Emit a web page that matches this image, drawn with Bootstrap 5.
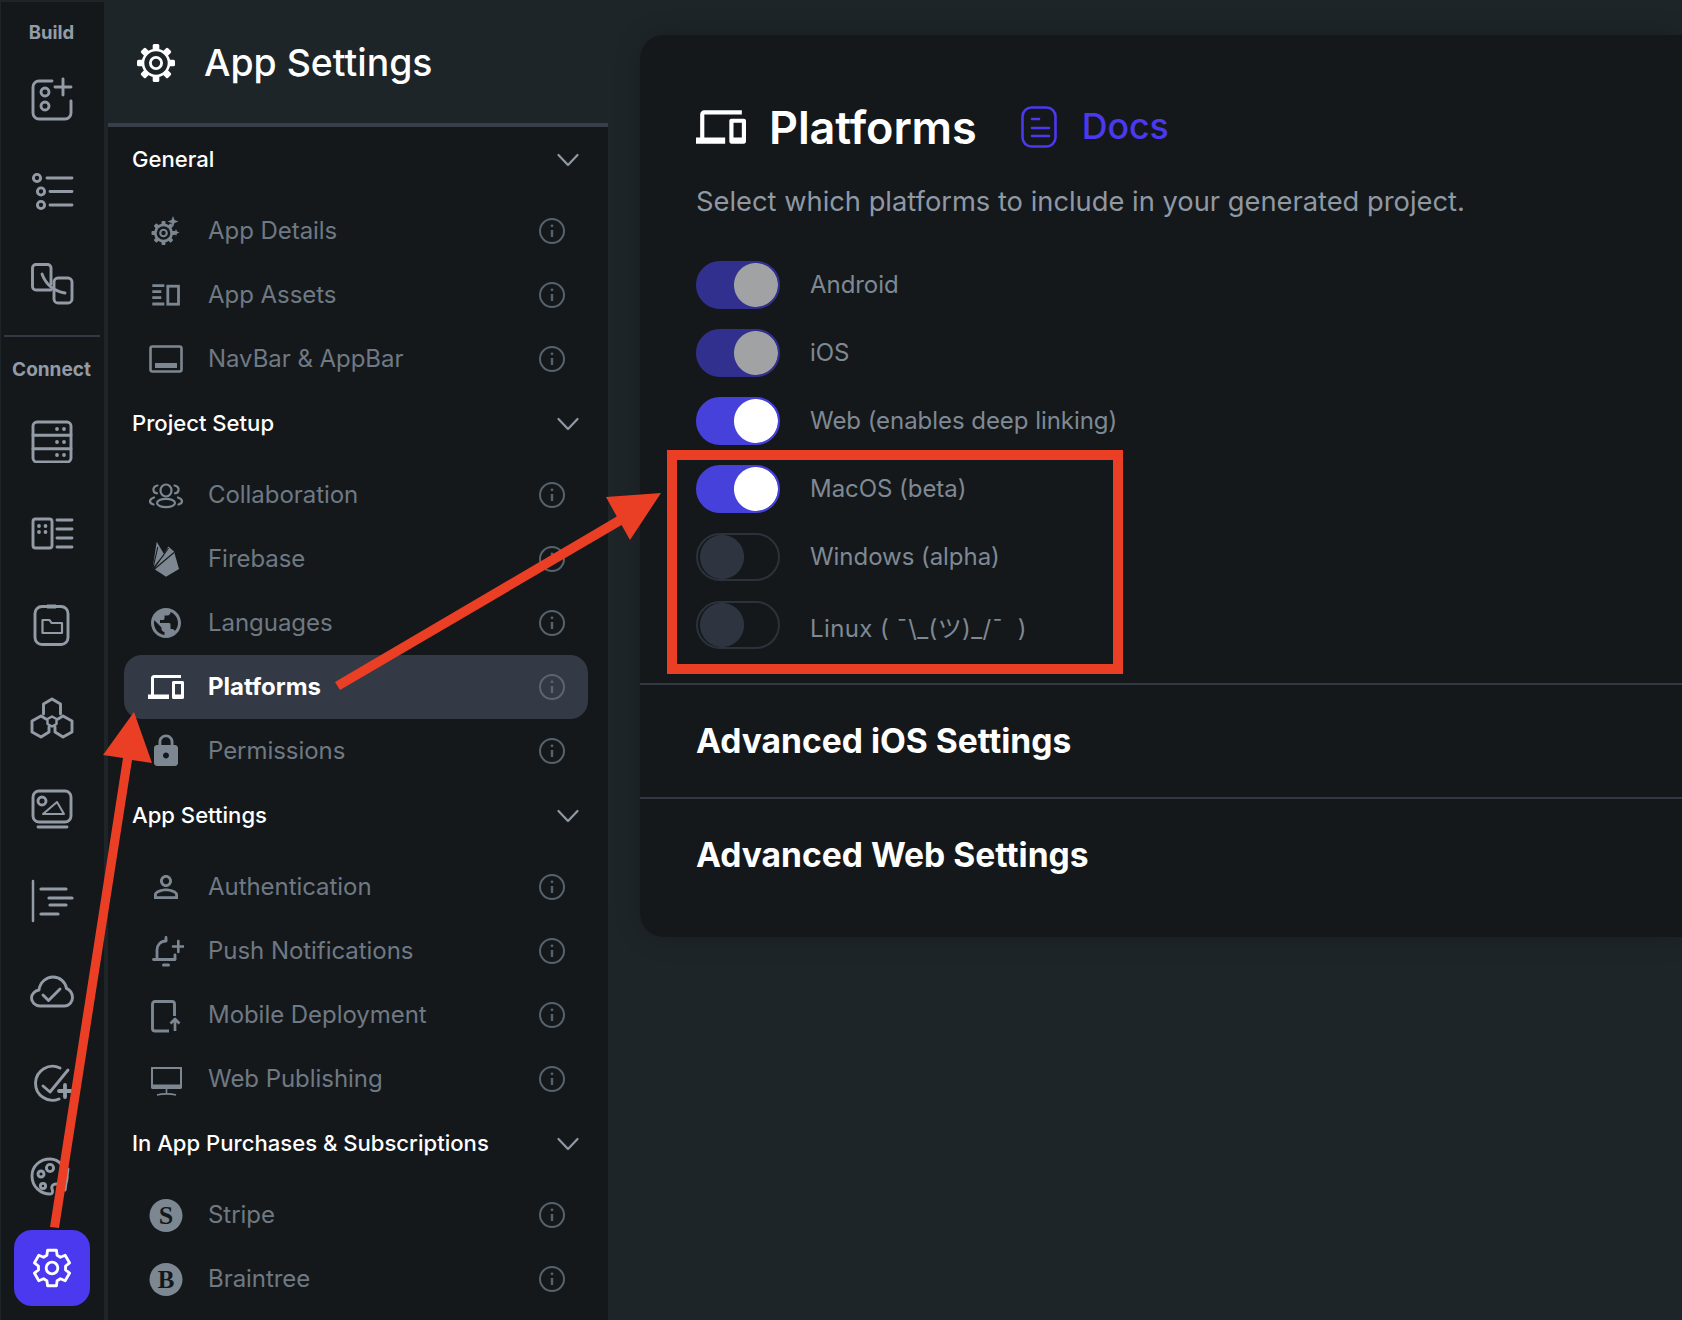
<!doctype html>
<html lang="en"><head><meta charset="utf-8"><title>App Settings</title>
<link href="https://cdn.jsdelivr.net/npm/bootstrap@5.3.0/dist/css/bootstrap.min.css" rel="stylesheet">
<script src="https://cdn.jsdelivr.net/npm/bootstrap@5.3.0/dist/js/bootstrap.bundle.min.js"></script>
<style>
:root{--pg:#1e2529;--dk:#14181b;--line:#323943;--blue:#4b39ef}
html,body{height:1320px;overflow:hidden}
body{background:var(--pg);font-family:Inter,"Noto Sans CJK JP",sans-serif;color:#fff;position:relative}
.app-shell{height:1320px}
.rail{width:103px;margin:2px 0 0 1px;background:var(--dk);flex:none}
.rail-label{font-size:18.5px;font-weight:700;color:#939ca6;line-height:24px;text-align:center;padding-right:2px}
.rail-label.first{padding-top:18px;height:51px}
.rail-label.second{padding-top:21px;height:58px;font-size:19px}
.rail-sep{height:2px;margin:6px 4px 0 3px;background:var(--line);width:96px}
.rail-cell{height:92px;color:#939ca6;padding-right:2px}
.rail-cell svg{stroke-width:2.9}
.rail-active{width:76px;height:76px;background:var(--blue);border-radius:18px;margin:7px 13px 0;color:#fff}
.side{width:500px;margin-left:4px;flex:none;background:var(--dk)}
.side-head{height:127px;background:var(--pg);border-bottom:4px solid #383f4a;padding:2px 0 0 28px;gap:28px}
.side-title{font-size:37.4px;font-weight:500;line-height:1}
.sec-head{height:66px;margin-bottom:6px;padding:0 29px 0 24px;font-size:22.1px;font-weight:500}
.nav-row{height:64px;margin:0 20px 0 16px;padding:0 23px 0 24px;gap:24px;font-size:24px;letter-spacing:-.05px;color:#6f7983;border-radius:18px}
.nav-row .nico{color:#7d8791;flex:none}
.nav-row .inf{margin-left:auto;color:#57636c;flex:none}
.nav-row.on{background:#343a45;color:#fff;font-weight:700;letter-spacing:0}
.nav-row.on .nico{color:#fff}
.nav-row.on .inf{color:#5b6570}
.content{flex:1;padding:35px 0 0 32px;min-width:0}
.panel{background:var(--dk);border-radius:24px 0 0 24px;height:902px;box-shadow:0 0 26px rgba(0,0,0,.22)}
.panel-top{padding:62px 0 0 56px}
.title-row{height:60px}
.title-text{font-size:45px;font-weight:600;line-height:1;margin-left:23px;letter-spacing:-.1px}
.docs-text{font-size:35.7px;font-weight:500;color:var(--blue);line-height:1;margin-left:25px}
.docs-ico{margin-left:44px;color:var(--blue)}
.desc{font-size:27.3px;line-height:40px;color:#8f98a3;margin-top:25px}
.plat-list{margin-top:39px}
.plat-row{height:48px;margin-bottom:20px;gap:30px;font-size:24px;letter-spacing:-.05px;padding:0!important}
.plat-row:last-child{margin-bottom:0}
.form-switch .form-check-input.tg{width:84px;height:48px;margin:0;float:none;flex:none;border:2px solid #2b323b;border-radius:24px;background-color:transparent;background-repeat:no-repeat;background-size:48px 48px;background-position:left 0 center;background-image:radial-gradient(circle at center,#2e3540 21.5px,transparent 22.5px);box-shadow:none;opacity:1}
.form-switch .form-check-input.tg:checked{background-color:#4741dc;border-color:#4741dc;background-position:right -2px center;background-image:radial-gradient(circle at center,#fff 21.5px,transparent 22.5px)}
.form-switch .form-check-input.tg:disabled{opacity:.6}
.form-check-label.plab{opacity:1!important;color:#7f8993}
.shrug{padding-top:7px;letter-spacing:.4px}
.adv{height:114px;border-top:2px solid var(--line);padding-left:56px;font-size:33.6px;font-weight:700}
.adv-wrap{margin-top:34px}
.overlay{position:absolute;left:0;top:0;pointer-events:none}
</style></head>
<body>
<div class="app-shell d-flex">
<nav class="rail d-flex flex-column">
 <div class="rail-label first">Build</div>
 <div class="rail-cell d-flex align-items-center justify-content-center"><svg width="44" height="44" fill="none" stroke="currentColor" stroke-width="2.5" stroke-linecap="round"><path d="M22 4H9a6 6 0 0 0-6 6v26a6 6 0 0 0 6 6h26a6 6 0 0 0 6-6V24"/><circle cx="15" cy="15" r="4"/><circle cx="15" cy="29" r="4"/><path d="M33 2v16M25 10h16"/></svg></div>
 <div class="rail-cell d-flex align-items-center justify-content-center"><svg width="44" height="44" fill="none" stroke="currentColor" stroke-width="2.5" stroke-linecap="round"><circle cx="7" cy="9" r="3.6"/><circle cx="11" cy="22.5" r="3.6"/><circle cx="11" cy="36" r="3.6"/><path d="M17 9h25M20 22.5h22M20 36h22"/></svg></div>
 <div class="rail-cell d-flex align-items-center justify-content-center"><svg width="44" height="44" fill="none" stroke="currentColor" stroke-width="2.5" stroke-linecap="round"><path d="M21 23V7a3.500 3.500 0 0 0-3.500-3.500H6A3.500 3.500 0 0 0 2.500 7v18.500A3.500 3.500 0 0 0 6 29h15"/><rect x="24" y="17" width="18" height="25" rx="4"/><path d="M12 13c4 11 12 17 23 19"/></svg></div>
 <div class="rail-sep"></div>
 <div class="rail-label second">Connect</div>
 <div class="rail-cell d-flex align-items-center justify-content-center"><svg width="44" height="44" fill="none" stroke="currentColor" stroke-width="2.5" stroke-linecap="round"><rect x="3" y="3" width="38" height="40" rx="4"/><path d="M3 16.300h38M3 29.700h38"/><g fill="currentColor" stroke="none"><circle cx="27" cy="10" r="1.900"/><circle cx="34" cy="10" r="1.900"/><circle cx="27" cy="23" r="1.900"/><circle cx="34" cy="23" r="1.900"/><circle cx="27" cy="36" r="1.900"/><circle cx="34" cy="36" r="1.900"/></g></svg></div>
 <div class="rail-cell d-flex align-items-center justify-content-center"><svg width="44" height="44" fill="none" stroke="currentColor" stroke-width="2.5" stroke-linecap="round"><rect x="3" y="8" width="19" height="29" rx="2.500"/><path d="M27 9h15M27 18h15M27 27h15M27 36h15"/><g fill="currentColor" stroke="none"><circle cx="9" cy="15" r="1.900"/><circle cx="15.500" cy="15" r="1.900"/><circle cx="9" cy="21" r="1.900"/><circle cx="15.500" cy="21" r="1.900"/></g></svg></div>
 <div class="rail-cell d-flex align-items-center justify-content-center"><svg width="44" height="44" fill="none" stroke="currentColor" stroke-width="2.5" stroke-linejoin="round"><rect x="5" y="3.500" width="33" height="38" rx="7"/><path d="M17 3.500h9" stroke-width="4"/><path d="M12.500 17h7l2 3h10.500v10H12.500z" stroke-width="2.200"/></svg></div>
 <div class="rail-cell d-flex align-items-center justify-content-center"><svg width="44" height="44" fill="none" stroke="currentColor" stroke-width="2.500" stroke-linejoin="round" stroke-linecap="round"><path d="M13.500 19V9l8.500-5 8.500 5v10"/><path d="M16 24l-5-3-9 5v11l9 5 8-5v-5"/><path d="M28 24l5-3 9 5v11l-9 5-8-5v-5"/><path d="M22 21.500l4.500 2.500v5l-4.500 2.500-4.500-2.500v-5z" stroke-width="2.400"/></svg></div>
 <div class="rail-cell d-flex align-items-center justify-content-center"><svg width="44" height="44" fill="none" stroke="currentColor" stroke-width="2.500" stroke-linejoin="round" stroke-linecap="round"><rect x="3" y="4" width="38" height="31" rx="6"/><circle cx="12" cy="14" r="4"/><path d="M27 15l7 12H13z" stroke-width="2"/><path d="M8 40h29"/></svg></div>
 <div class="rail-cell d-flex align-items-center justify-content-center"><svg width="44" height="44" fill="none" stroke="currentColor" stroke-linecap="round"><path d="M3 2v40" stroke-width="2.500"/><path d="M11 10h25M19 19h23M20 26h16M11 35h17" stroke-width="3.200"/></svg></div>
 <div class="rail-cell d-flex align-items-center justify-content-center"><svg width="44" height="44" fill="none" stroke="currentColor" stroke-width="2.500" stroke-linecap="round" stroke-linejoin="round"><path d="M10 35c-5 0-8.500-4-8.500-8s3.500-7.500 7.500-8C10 11 16.500 6 23 6c7 0 12.500 5 13.500 11.500 3.500 1 6 5 6 9 0 4.500-3.500 8.500-8 8.500z"/><path d="M13 24l5.500 5.500L30 18"/></svg></div>
 <div class="rail-cell d-flex align-items-center justify-content-center"><svg width="44" height="44" fill="none" stroke="currentColor" stroke-width="2.500" stroke-linecap="round" stroke-linejoin="round"><path d="M30 5a17 17 0 1 0-1 31"/><path d="M13 23l7 6L38 7"/><path d="M35 22v12M29 28h12" stroke-width="3.800"/></svg></div>
 <div class="rail-cell d-flex align-items-center justify-content-center"><svg width="44" height="44" fill="none" stroke="currentColor" stroke-width="2.300" stroke-linecap="round" stroke-linejoin="round"><path d="M20 4C10 4 2 11 2 21c0 11 9 18 18 18 3 0 3-3 2-5-1-3 1-5 4-5h6c3 0 5-2 5-6 0-10-8-19-17-19z"/><circle cx="20" cy="13" r="3.600"/><circle cx="11" cy="19" r="3"/><circle cx="13" cy="31" r="2.600"/><path d="M38 14l-3 21"/></svg></div>
 <div class="rail-active d-flex align-items-center justify-content-center"><svg width="40" height="40" viewBox="0 0 24 24" fill="none" stroke="currentColor" stroke-width="1.700" stroke-linejoin="round"><path d="M8.930 4.400L9.340 1.330H14.660L15.070 4.400L17.050 5.540L19.910 4.360L22.570 8.970L20.120 10.860V13.140L22.570 15.030L19.910 19.640L17.050 18.460L15.070 19.600L14.660 22.670H9.340L8.930 19.600L6.950 18.460L4.090 19.640L1.430 15.030L3.880 13.140V10.860L1.430 8.970L4.090 4.360L6.950 5.540Z"/><circle cx="12" cy="12" r="3.500"/></svg></div>
</nav>

<aside class="side">
 <div class="side-head d-flex align-items-center">
  <svg width="40" height="40" viewBox="0 0 40 40" fill="none"><g fill="#fff"><rect x="16.700" y="1" width="6.600" height="8" rx="1.500"/><rect x="16.700" y="1" width="6.600" height="8" rx="1.500" transform="rotate(45 20 20)"/><rect x="16.700" y="1" width="6.600" height="8" rx="1.500" transform="rotate(90 20 20)"/><rect x="16.700" y="1" width="6.600" height="8" rx="1.500" transform="rotate(135 20 20)"/><rect x="16.700" y="1" width="6.600" height="8" rx="1.500" transform="rotate(180 20 20)"/><rect x="16.700" y="1" width="6.600" height="8" rx="1.500" transform="rotate(225 20 20)"/><rect x="16.700" y="1" width="6.600" height="8" rx="1.500" transform="rotate(270 20 20)"/><rect x="16.700" y="1" width="6.600" height="8" rx="1.500" transform="rotate(315 20 20)"/></g><circle cx="20" cy="20" r="13" fill="#1e2529" stroke="#fff" stroke-width="2.600"/><circle cx="20" cy="20" r="5.600" stroke="#fff" stroke-width="2.800"/></svg>
  <div class="side-title">App Settings</div>
 </div>

 <div class="sec-head d-flex align-items-center justify-content-between"><span>General</span><svg width="22" height="14" fill="none" stroke="#8f98a3" stroke-width="2.200" stroke-linecap="round" stroke-linejoin="round"><path d="M1.500 2L11 12l9.500-10"/></svg></div>
 <div class="nav-row d-flex align-items-center"><svg class="nico" width="36" height="36" viewBox="0 0 36 36" fill="currentColor"><g><rect x="13.500" y="8" width="4" height="24" rx="1"/><rect x="13.500" y="8" width="4" height="24" rx="1" transform="rotate(45 15.500 20)"/><rect x="13.500" y="8" width="4" height="24" rx="1" transform="rotate(90 15.500 20)"/><rect x="13.500" y="8" width="4" height="24" rx="1" transform="rotate(135 15.500 20)"/></g><circle cx="15.500" cy="20" r="9.500"/><circle cx="15.500" cy="20" r="6.800" fill="#14181b"/><circle cx="15.500" cy="20" r="4.300"/><circle cx="15.500" cy="20" r="2.200" fill="#14181b"/><path d="M25 3l1.500 4 4 1.500-4 1.500-1.500 4-1.500-4-4-1.500 4-1.500zM28 16l1 2.500 2.500 1-2.500 1-1 2.500-1-2.500-2.500-1 2.500-1z"/></svg><span>App Details</span><svg class="inf" width="26" height="26" fill="none" stroke="currentColor" stroke-width="2"><circle cx="13" cy="13" r="12"/><path d="M13 12v7" stroke-width="2.400"/><circle cx="13" cy="7.800" r="1.400" fill="currentColor" stroke="none"/></svg></div>
 <div class="nav-row d-flex align-items-center"><svg class="nico" width="36" height="36" fill="none" stroke="currentColor" stroke-width="2.800"><path d="M4.300 8.700h12M4.300 14.700h9M4.300 20.700h9M4.300 27h12"/><rect x="19.800" y="9.200" width="10.700" height="18"/></svg><span>App Assets</span><svg class="inf" width="26" height="26" fill="none" stroke="currentColor" stroke-width="2"><circle cx="13" cy="13" r="12"/><path d="M13 12v7" stroke-width="2.400"/><circle cx="13" cy="7.800" r="1.400" fill="currentColor" stroke="none"/></svg></div>
 <div class="nav-row d-flex align-items-center"><svg class="nico" width="36" height="36" fill="none" stroke="currentColor" stroke-width="2.600"><rect x="2.500" y="5.500" width="31" height="25" rx="2"/><rect x="7" y="22" width="22" height="5" fill="currentColor" stroke="none"/></svg><span>NavBar &amp; AppBar</span><svg class="inf" width="26" height="26" fill="none" stroke="currentColor" stroke-width="2"><circle cx="13" cy="13" r="12"/><path d="M13 12v7" stroke-width="2.400"/><circle cx="13" cy="7.800" r="1.400" fill="currentColor" stroke="none"/></svg></div>

 <div class="sec-head d-flex align-items-center justify-content-between"><span>Project Setup</span><svg width="22" height="14" fill="none" stroke="#8f98a3" stroke-width="2.200" stroke-linecap="round" stroke-linejoin="round"><path d="M1.500 2L11 12l9.500-10"/></svg></div>
 <div class="nav-row d-flex align-items-center"><svg class="nico" width="36" height="36" fill="none" stroke="currentColor" stroke-width="2.200" stroke-linecap="round"><ellipse cx="18" cy="13.500" rx="5.500" ry="6"/><ellipse cx="18" cy="26" rx="9" ry="4.200"/><path d="M9.500 8.500C6.500 9 5 11 5.500 13.500c.3 1.500 2 2.700 3.500 2.800M26.500 8.500c3 .5 4.500 2.500 4 5-.3 1.500-2 2.700-3.500 2.800M6 20.500c-2.500.8-4 2.200-4 3.800s1.500 2.700 3.500 3.200M30 20.500c2.500.8 4 2.200 4 3.800s-1.500 2.700-3.500 3.200"/></svg><span>Collaboration</span><svg class="inf" width="26" height="26" fill="none" stroke="currentColor" stroke-width="2"><circle cx="13" cy="13" r="12"/><path d="M13 12v7" stroke-width="2.400"/><circle cx="13" cy="7.800" r="1.400" fill="currentColor" stroke="none"/></svg></div>
 <div class="nav-row d-flex align-items-center"><svg class="nico" width="36" height="36" fill="currentColor"><path d="M4.700 27L8.700.7 16 13l4.300-7.500 5.700 5L31 28 18 35.700z"/><path d="M5 27L9.800 6M5 27.500L15.800 13.800M5.500 28L20.500 7M6 28.500L26 11.500" fill="none" stroke="#14181b" stroke-width="1.100"/></svg><span>Firebase</span><svg class="inf" width="26" height="26" fill="none" stroke="currentColor" stroke-width="2"><circle cx="13" cy="13" r="12"/><path d="M13 12v7" stroke-width="2.400"/><circle cx="13" cy="7.800" r="1.400" fill="currentColor" stroke="none"/></svg></div>
 <div class="nav-row d-flex align-items-center"><svg class="nico" width="36" height="36" viewBox="0 0 24 24" fill="currentColor"><path d="M12 2C6.480 2 2 6.480 2 12s4.480 10 10 10 10-4.480 10-10S17.520 2 12 2zm-1 17.930c-3.950-.490-7-3.850-7-7.930 0-.620.080-1.210.210-1.790L9 15v1c0 1.100.900 2 2 2v1.930zm6.900-2.540c-.260-.810-1-1.390-1.900-1.390h-1v-3c0-.550-.450-1-1-1H8v-2h2c.550 0 1-.450 1-1V7h2c1.100 0 2-.900 2-2v-.410c2.930 1.190 5 4.060 5 7.410 0 2.080-.800 3.970-2.100 5.390z"/></svg><span>Languages</span><svg class="inf" width="26" height="26" fill="none" stroke="currentColor" stroke-width="2"><circle cx="13" cy="13" r="12"/><path d="M13 12v7" stroke-width="2.400"/><circle cx="13" cy="7.800" r="1.400" fill="currentColor" stroke="none"/></svg></div>
 <div class="nav-row on d-flex align-items-center"><svg class="nico" width="36" height="36" viewBox="0 0 24 24" fill="currentColor"><path d="M4 6h18V4H4c-1.100 0-2 .900-2 2v11H0v3h14v-3H4V6zm19 2h-6c-.550 0-1 .450-1 1v10c0 .550.450 1 1 1h6c.550 0 1-.450 1-1V9c0-.550-.450-1-1-1zm-1 9h-4v-7h4v7z"/></svg><span>Platforms</span><svg class="inf" width="26" height="26" fill="none" stroke="currentColor" stroke-width="2"><circle cx="13" cy="13" r="12"/><path d="M13 12v7" stroke-width="2.400"/><circle cx="13" cy="7.800" r="1.400" fill="currentColor" stroke="none"/></svg></div>
 <div class="nav-row d-flex align-items-center"><svg class="nico" width="36" height="36" viewBox="0 0 24 24" fill="currentColor"><path d="M18 8h-1V6c0-2.760-2.240-5-5-5S7 3.240 7 6v2H6c-1.100 0-2 .900-2 2v10c0 1.100.900 2 2 2h12c1.100 0 2-.900 2-2V10c0-1.100-.900-2-2-2zm-6 9c-1.100 0-2-.900-2-2s.900-2 2-2 2 .900 2 2-.900 2-2 2zm3.100-9H8.900V6c0-1.710 1.390-3.100 3.100-3.100 1.710 0 3.100 1.390 3.100 3.100v2z"/></svg><span>Permissions</span><svg class="inf" width="26" height="26" fill="none" stroke="currentColor" stroke-width="2"><circle cx="13" cy="13" r="12"/><path d="M13 12v7" stroke-width="2.400"/><circle cx="13" cy="7.800" r="1.400" fill="currentColor" stroke="none"/></svg></div>

 <div class="sec-head d-flex align-items-center justify-content-between"><span>App Settings</span><svg width="22" height="14" fill="none" stroke="#8f98a3" stroke-width="2.200" stroke-linecap="round" stroke-linejoin="round"><path d="M1.500 2L11 12l9.500-10"/></svg></div>
 <div class="nav-row d-flex align-items-center"><svg class="nico" width="36" height="36" viewBox="0 0 24 24" fill="currentColor"><path d="M12 5.900c1.160 0 2.100.940 2.100 2.100s-.940 2.100-2.100 2.100S9.900 9.160 9.900 8s.940-2.100 2.100-2.100m0 9c2.970 0 6.100 1.460 6.100 2.100v1.100H5.900V17c0-.640 3.130-2.100 6.100-2.100M12 4C9.790 4 8 5.790 8 8s1.790 4 4 4 4-1.790 4-4-1.790-4-4-4zm0 9c-2.670 0-8 1.340-8 4v3h16v-3c0-2.660-5.330-4-8-4z"/></svg><span>Authentication</span><svg class="inf" width="26" height="26" fill="none" stroke="currentColor" stroke-width="2"><circle cx="13" cy="13" r="12"/><path d="M13 12v7" stroke-width="2.400"/><circle cx="13" cy="7.800" r="1.400" fill="currentColor" stroke="none"/></svg></div>
 <div class="nav-row d-flex align-items-center"><svg class="nico" width="36" height="36" fill="none" stroke="currentColor" stroke-width="2.800" stroke-linecap="round"><path d="M9 26V17c0-5 3.500-9 9-9M27 26v-4"/><path d="M18 4.500v3M5.500 26.500h21.500"/><path d="M15.500 32h5" stroke-width="3"/><path d="M30.300 8v11M25 13.500h10.500" stroke-width="2.600"/></svg><span>Push Notifications</span><svg class="inf" width="26" height="26" fill="none" stroke="currentColor" stroke-width="2"><circle cx="13" cy="13" r="12"/><path d="M13 12v7" stroke-width="2.400"/><circle cx="13" cy="7.800" r="1.400" fill="currentColor" stroke="none"/></svg></div>
 <div class="nav-row d-flex align-items-center"><svg class="nico" width="36" height="36" fill="none" stroke="currentColor" stroke-width="2.900" stroke-linejoin="round"><path d="M21 34H7a2.500 2.500 0 0 1-2.500-2.500V7A2.500 2.500 0 0 1 7 4.500h17A2.500 2.500 0 0 1 26.500 7v12"/><path d="M27 34V22M22.500 26.500L27 22l4.500 4.500" stroke-width="2.700"/></svg><span>Mobile Deployment</span><svg class="inf" width="26" height="26" fill="none" stroke="currentColor" stroke-width="2"><circle cx="13" cy="13" r="12"/><path d="M13 12v7" stroke-width="2.400"/><circle cx="13" cy="7.800" r="1.400" fill="currentColor" stroke="none"/></svg></div>
 <div class="nav-row d-flex align-items-center"><svg class="nico" width="36" height="36" fill="none" stroke="currentColor" stroke-width="2"><rect x="4" y="7" width="29" height="19"/><rect x="3.500" y="23.500" width="30" height="4.500" fill="currentColor" stroke="none"/><path d="M18.500 28v4M9 34c5-1.500 14-1.500 19 0" stroke-width="1.600"/></svg><span>Web Publishing</span><svg class="inf" width="26" height="26" fill="none" stroke="currentColor" stroke-width="2"><circle cx="13" cy="13" r="12"/><path d="M13 12v7" stroke-width="2.400"/><circle cx="13" cy="7.800" r="1.400" fill="currentColor" stroke="none"/></svg></div>

 <div class="sec-head d-flex align-items-center justify-content-between"><span>In App Purchases &amp; Subscriptions</span><svg width="22" height="14" fill="none" stroke="#8f98a3" stroke-width="2.200" stroke-linecap="round" stroke-linejoin="round"><path d="M1.500 2L11 12l9.500-10"/></svg></div>
 <div class="nav-row d-flex align-items-center"><svg class="nico" width="36" height="36"><circle cx="18" cy="18.500" r="16.500" fill="currentColor"/><text x="18" y="27" text-anchor="middle" font-family="Liberation Serif" font-weight="700" font-size="26" fill="#14181b">S</text></svg><span>Stripe</span><svg class="inf" width="26" height="26" fill="none" stroke="currentColor" stroke-width="2"><circle cx="13" cy="13" r="12"/><path d="M13 12v7" stroke-width="2.400"/><circle cx="13" cy="7.800" r="1.400" fill="currentColor" stroke="none"/></svg></div>
 <div class="nav-row d-flex align-items-center"><svg class="nico" width="36" height="36"><circle cx="18" cy="18.500" r="16.500" fill="currentColor"/><text x="18" y="27" text-anchor="middle" font-family="Liberation Serif" font-weight="700" font-size="25" fill="#14181b">B</text></svg><span>Braintree</span><svg class="inf" width="26" height="26" fill="none" stroke="currentColor" stroke-width="2"><circle cx="13" cy="13" r="12"/><path d="M13 12v7" stroke-width="2.400"/><circle cx="13" cy="7.800" r="1.400" fill="currentColor" stroke="none"/></svg></div>
</aside>

<main class="content">
 <section class="panel">
  <div class="panel-top">
   <div class="title-row d-flex align-items-center">
    <svg width="50" height="50" viewBox="0 0 24 24" fill="#fff"><path d="M4 6h18V4H4c-1.100 0-2 .900-2 2v11H0v3h14v-3H4V6zm19 2h-6c-.550 0-1 .450-1 1v10c0 .550.450 1 1 1h6c.550 0 1-.450 1-1V9c0-.550-.450-1-1-1zm-1 9h-4v-7h4v7z"/></svg>
    <div class="title-text">Platforms</div>
    <svg class="docs-ico" width="36" height="42" fill="none" stroke="currentColor" stroke-width="2.600" stroke-linecap="round"><rect x="1.500" y="1.500" width="33" height="39" rx="9"/><path d="M11 13h7M11 22h17M11 30h17"/></svg>
    <div class="docs-text">Docs</div>
   </div>
   <div class="desc">Select which platforms to include in your generated project.</div>
   <div class="plat-list">
    <div class="plat-row form-check form-switch d-flex align-items-center"><input class="form-check-input tg" type="checkbox" role="switch" id="p1" checked disabled><label class="form-check-label plab" for="p1">Android</label></div>
    <div class="plat-row form-check form-switch d-flex align-items-center"><input class="form-check-input tg" type="checkbox" role="switch" id="p2" checked disabled><label class="form-check-label plab" for="p2">iOS</label></div>
    <div class="plat-row form-check form-switch d-flex align-items-center"><input class="form-check-input tg" type="checkbox" role="switch" id="p3" checked><label class="form-check-label plab" for="p3">Web (enables deep linking)</label></div>
    <div class="plat-row form-check form-switch d-flex align-items-center"><input class="form-check-input tg" type="checkbox" role="switch" id="p4" checked><label class="form-check-label plab" for="p4">MacOS (beta)</label></div>
    <div class="plat-row form-check form-switch d-flex align-items-center"><input class="form-check-input tg" type="checkbox" role="switch" id="p5"><label class="form-check-label plab" for="p5">Windows (alpha)</label></div>
    <div class="plat-row form-check form-switch d-flex align-items-center"><input class="form-check-input tg" type="checkbox" role="switch" id="p6"><label class="form-check-label plab shrug" for="p6">Linux ( ¯\_(ツ)_/¯ &nbsp;)</label></div>
   </div>
  </div>
  <div class="adv-wrap">
   <div class="adv d-flex align-items-center">Advanced iOS Settings</div>
   <div class="adv d-flex align-items-center">Advanced Web Settings</div>
  </div>
 </section>
</main>
</div>

<svg class="overlay" width="1682" height="1320" aria-hidden="true">
 <g fill="#ea3f25"><polygon points="134,712 152,763 132,760 59,1228 50,1227 123,758 103,755"/><polygon points="661,493 606,497 616.800,516.500 335,682 340,690 621.600,525 630,540"/></g>
 <rect x="672" y="455" width="446" height="214" fill="none" stroke="#ea3f25" stroke-width="10"/>
</svg>
</body></html>
